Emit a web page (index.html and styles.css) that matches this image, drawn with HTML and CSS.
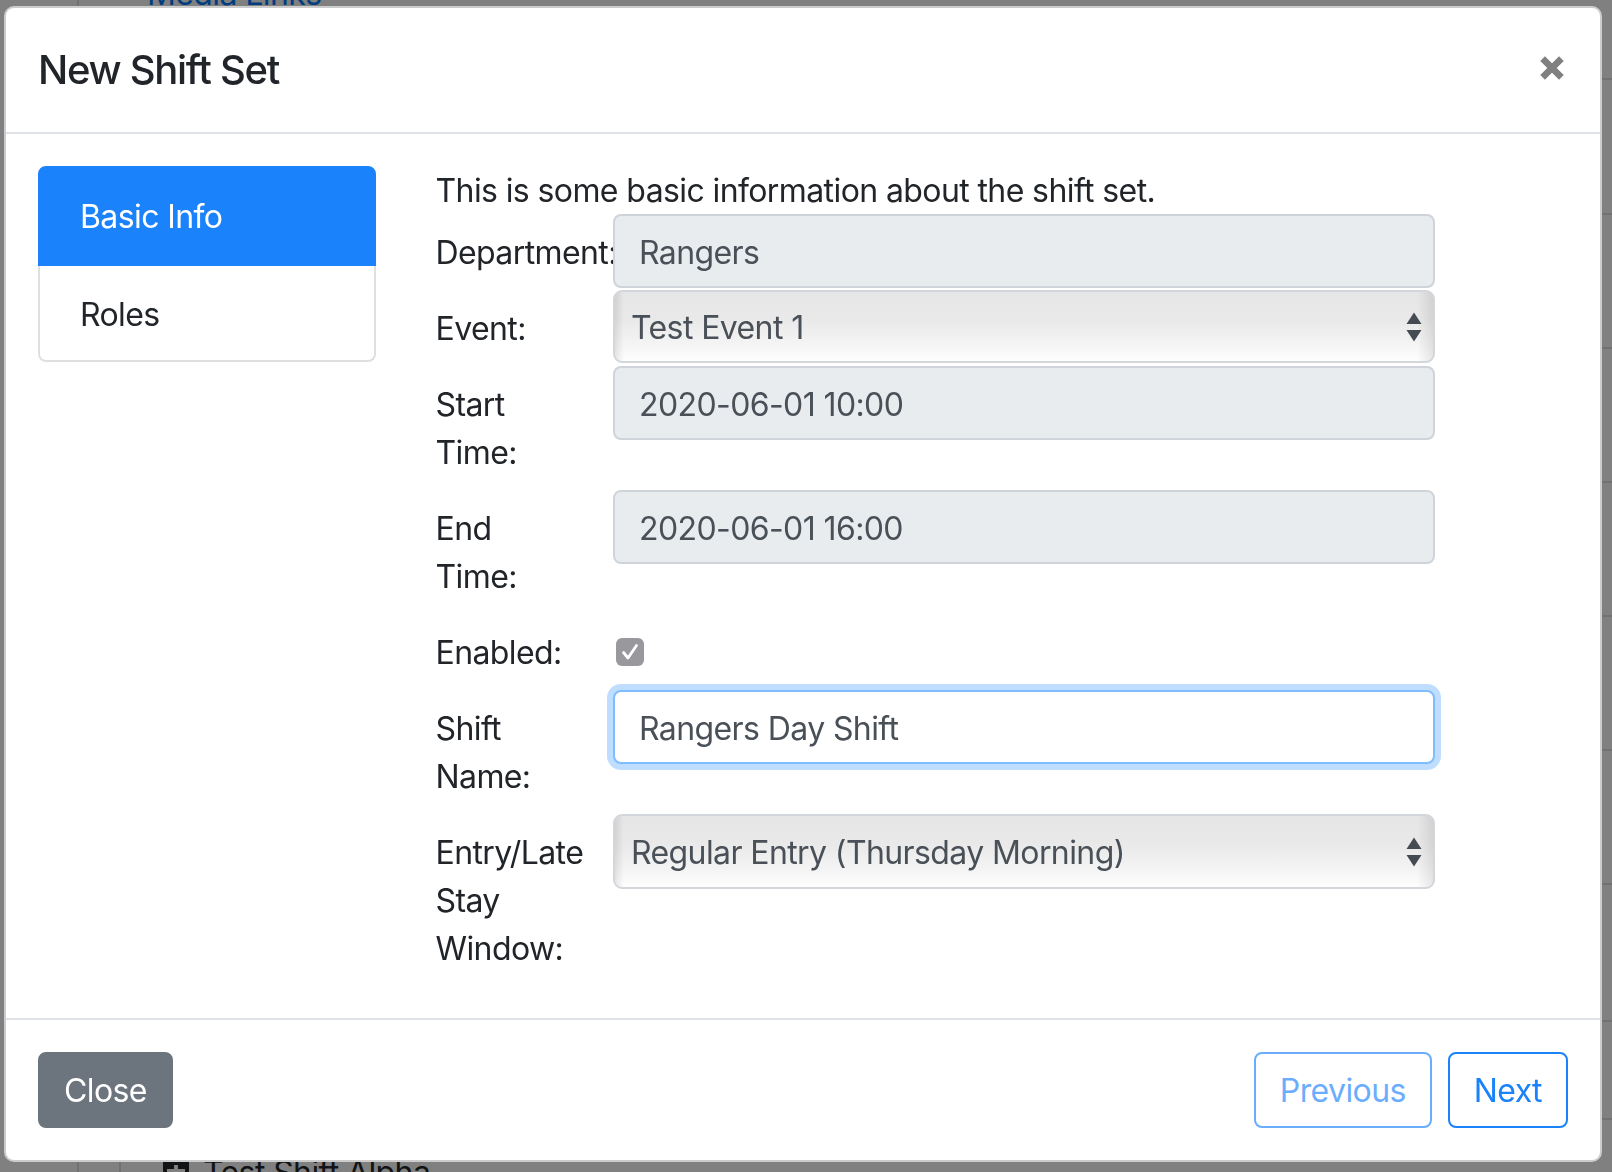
FILE: index.html
```html
<!DOCTYPE html>
<html lang="en">
<head>
<meta charset="utf-8">
<title>New Shift Set</title>
<link rel="stylesheet" href="styles.css">
</head>
<body>
<div class="page">
  <div class="pg-col1"></div>
  <div class="pg-col2"><div class="pg-col2-tick"></div></div>
  <div class="pg-main">
    <div class="pg-row pg-r1"><span class="pg-link">Media Links</span></div>
    <div class="pg-row pg-r2"></div>
    <div class="pg-row pg-r3"></div>
    <div class="pg-row pg-r3"></div>
    <div class="pg-row pg-r3"></div>
    <div class="pg-row pg-r3"></div>
    <div class="pg-row pg-r3"></div>
    <div class="pg-row pg-r8"></div>
    <div class="pg-row pg-r9"></div>
    <div class="pg-last">
      <svg class="pg-icon" width="26" height="26" viewBox="0 0 26 26"><rect x="2" y="2" width="22" height="22" fill="none" stroke="#111315" stroke-width="4"/><rect x="2" y="2" width="22" height="7" fill="#111315"/><rect x="11" y="5" width="4" height="8" fill="#808080"/></svg>
      <span class="pg-text">Test Shift Alpha</span>
    </div>
  </div>
</div>

<div class="modal">
  <div class="modal-header">
    <h5 class="modal-title">New Shift Set</h5>
    <button class="close-btn" type="button" aria-label="Close">
      <svg width="24" height="24" viewBox="0 0 24 24"><path d="M2.6 2.6 L21.4 21.4 M21.4 2.6 L2.6 21.4" stroke="#808080" stroke-width="6.6" fill="none"/></svg>
    </button>
  </div>
  <div class="modal-body">
    <div class="nav-list">
      <div class="nav-item active">Basic Info</div>
      <div class="nav-item">Roles</div>
    </div>
    <div class="form-col">
      <p class="intro">This is some basic information about the shift set.</p>
      <div class="form-row">
        <div class="form-label">Department:</div>
        <div class="control input disabled">Rangers</div>
      </div>
      <div class="form-row">
        <div class="form-label">Event:</div>
        <div class="control select">
          <span>Test Event 1</span>
          <svg class="arrows" width="16" height="30" viewBox="0 0 16 30"><polygon points="0.5,12 8,0.5 15.5,12" fill="#454b52"/><polygon points="0.5,18 15.5,18 8,29.5" fill="#454b52"/></svg>
        </div>
      </div>
      <div class="form-row">
        <div class="form-label">Start Time:</div>
        <div class="control input disabled">2020-06-01 10:00</div>
      </div>
      <div class="form-row">
        <div class="form-label">End Time:</div>
        <div class="control input disabled">2020-06-01 16:00</div>
      </div>
      <div class="form-row">
        <div class="form-label">Enabled:</div>
        <div class="control check-cell">
          <svg width="28" height="28" viewBox="0 0 28 28"><rect x="0" y="0" width="28" height="28" rx="6" fill="#98989d"/><path d="M7.5 14.5 L12 20 L20.5 7.5" stroke="#fff" stroke-width="2.8" fill="none" stroke-linecap="round" stroke-linejoin="round"/></svg>
        </div>
      </div>
      <div class="form-row">
        <div class="form-label">Shift Name:</div>
        <div class="control input focused">Rangers Day Shift</div>
      </div>
      <div class="form-row">
        <div class="form-label">Entry/Late Stay Window:</div>
        <div class="control select select-tall">
          <span>Regular Entry (Thursday Morning)</span>
          <svg class="arrows" width="16" height="30" viewBox="0 0 16 30"><polygon points="0.5,12 8,0.5 15.5,12" fill="#454b52"/><polygon points="0.5,18 15.5,18 8,29.5" fill="#454b52"/></svg>
        </div>
      </div>
    </div>
  </div>
  <div class="modal-footer">
    <button class="btn btn-secondary" type="button">Close</button>
    <button class="btn btn-outline disabled" type="button">Previous</button>
    <button class="btn btn-outline" type="button">Next</button>
  </div>
</div>
</body>
</html>
```

FILE: styles.css
```css
* { box-sizing: border-box; }

body {
  margin: 0;
  background: #808080;
  font-family: Inter, "Noto Sans", "Liberation Sans", sans-serif;
  font-size: 32px;
  line-height: 48px;
  letter-spacing: -0.6px;
  color: #212529;
}

/* ---------- dimmed page behind the dialog ---------- */
.page {
  display: flex;
  height: 1172px;
  overflow: hidden;
}
.pg-col1 { flex: none; width: 79px; border-right: 2px solid #6f7173; }
.pg-col2 { flex: none; width: 42px; display: flex; flex-direction: column; justify-content: flex-end; }
.pg-col2-tick { height: 24px; border-right: 2px solid #6f7173; }
.pg-main { flex: 1; display: flex; flex-direction: column; }
.pg-row { flex: none; border-bottom: 2px solid #6f7173; }
.pg-r1 { height: 80px; padding-left: 26px; }
.pg-r2 { height: 135px; }
.pg-r3 { height: 134px; }
.pg-r8 { height: 137px; }
.pg-r9 { height: 98px; }
.pg-link {
  display: block;
  margin-top: -30px;
  color: #003e80;
  white-space: nowrap;
}
.pg-last {
  display: flex;
  align-items: flex-start;
  gap: 14px;
  padding: 29px 0 0 42px;
  color: #111315;
}
.pg-icon { flex: none; margin-top: 11px; }
.pg-text { white-space: nowrap; }

/* ---------- dialog ---------- */
.modal {
  position: fixed;
  top: 6px;
  left: 4px;
  width: 1598px;
  background: #fff;
  border: 2px solid rgba(0, 0, 0, 0.2);
  border-radius: 10px;
}

.modal-header {
  display: flex;
  align-items: flex-start;
  justify-content: space-between;
  padding: 32px;
  border-bottom: 2px solid #dee2e6;
}
.modal-title {
  margin: 0;
  font-size: 40px;
  line-height: 60px;
  font-weight: 500;
  letter-spacing: -1.3px;
}
.close-btn {
  border: 0;
  padding: 0;
  background: none;
  margin: 16px 4px 0 0;
  width: 24px;
  height: 24px;
  display: block;
}
.close-btn svg { display: block; }

.modal-body {
  display: grid;
  grid-template-columns: 337.5px 1fr;
  column-gap: 60px;
  padding: 32px;
}

/* left nav */
.nav-list { display: flex; flex-direction: column; align-self: start; }
.nav-item {
  padding: 25px 40px 21px;
  border: 2px solid #dfdfdf;
  border-top: 0;
  border-radius: 0 0 8px 8px;
  color: #212529;
}
.nav-item.active {
  padding: 25px 40px 23px;
  background: #1a82fb;
  border: 2px solid #1a82fb;
  border-radius: 8px 8px 0 0;
  color: #fff;
}

/* form */
.intro { margin: 0; padding-top: 1px; height: 48px; line-height: 47px; }
.form-row { display: flex; align-items: flex-start; }
.form-label {
  flex: none;
  width: 142px;
  padding: 15px 0 13px;
  white-space: normal;
}
.control {
  flex: none;
  width: 822px;
  margin-left: 35.5px;
}
.input {
  height: 74px;
  display: flex;
  align-items: center;
  padding: 3px 24px 0;
  border: 2px solid #ced4da;
  border-radius: 8px;
  color: #495057;
  white-space: nowrap;
}
.input.disabled { background: #e9ecef; }
.input.focused {
  background: #fff;
  border-color: #80bdff;
  box-shadow: 0 0 0 6px rgba(0, 123, 255, 0.25);
}
.select {
  height: 73px;
  display: flex;
  align-items: center;
  justify-content: space-between;
  padding: 2px 11px 0 16px;
  border: 2px solid #d3d7dc;
  border-radius: 9px;
  color: #495057;
  white-space: nowrap;
  background:
    linear-gradient(to right, rgba(0,0,0,0.09), rgba(0,0,0,0) 9px, rgba(0,0,0,0) calc(100% - 16px), rgba(0,0,0,0.09)),
    linear-gradient(#e6e6e6, #e9e9e9 40%, #f4f4f4 75%, #fefefe);
}
.select .arrows { margin-top: -2px; }
.select-tall { height: 75px; }
.arrows { flex: none; display: block; }
.check-cell { padding: 24px 0 0 3px; }
.check-cell svg { display: block; }

/* footer */
.modal-footer {
  display: flex;
  align-items: center;
  padding: 24px;
  border-top: 2px solid #dee2e6;
}
.btn {
  margin: 8px;
  padding: 13px 24px 11px;
  font-family: inherit;
  font-size: 32px;
  line-height: 48px;
  letter-spacing: -0.6px;
  border: 2px solid transparent;
  border-radius: 8px;
  background: #fff;
}
.btn-secondary {
  margin-right: auto;
  background: #6c757d;
  border-color: #6c757d;
  color: #fff;
}
.btn-outline {
  color: #1a82fb;
  border-color: #1a82fb;
}
.btn-outline.disabled { opacity: 0.65; }
```
